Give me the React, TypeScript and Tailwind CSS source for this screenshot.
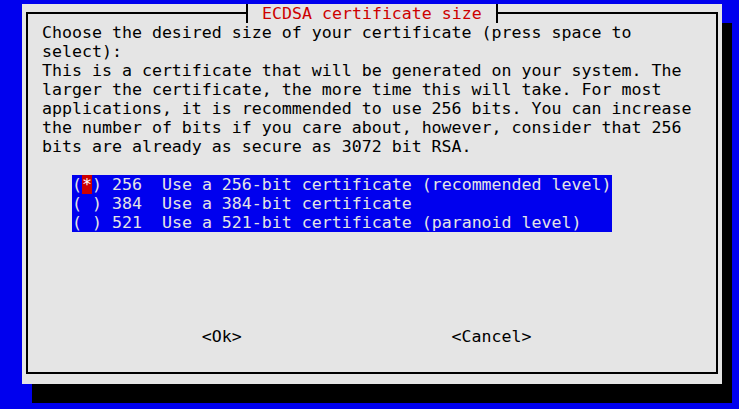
const promptLines = [
  "Choose the desired size of your certificate (press space to",
  "select):",
  "This is a certificate that will be generated on your system. The",
  "larger the certificate, the more time this will take. For most",
  "applications, it is recommended to use 256 bits. You can increase",
  "the number of bits if you care about, however, consider that 256",
  "bits are already as secure as 3072 bit RSA.",
];

const options = [
  { bits: "256", label: "Use a 256-bit certificate (recommended level)", selected: true },
  { bits: "384", label: "Use a 384-bit certificate", selected: false },
  { bits: "521", label: "Use a 521-bit certificate (paranoid level)", selected: false },
];

const App = () => {
  return (
    <div
      className="w-full h-screen bg-[#0000ee] pt-[4px] pl-[22px] overflow-hidden text-[16.6px] leading-[19px] whitespace-pre"
      style={{ fontFamily: '"DejaVu Sans Mono", "Liberation Mono", monospace' }}
    >
      {/* dialog box with its shadow */}
      <div className="relative w-[700px] h-[380px] bg-[#e5e5e5] pl-[4px] pt-[8px] shadow-[10px_19px_0_0_#000]">
        <div className="w-[692px] h-[362px] border-2 border-black pl-[14px] pt-[9px] text-black">
          {promptLines.map((line) => (
            <div key={line}>{line}</div>
          ))}

          {/* radio list */}
          <div className="mt-[19px] ml-[30px] w-[540px] bg-[#0000ee] text-[#e5e5e5]">
            {options.map((opt) => (
              <div key={opt.bits} className="flex">
                <span>(</span>
                {opt.selected ? (
                  <span className="bg-[#cd0000] text-white">*</span>
                ) : (
                  <span> </span>
                )}
                <span>{`) ${opt.bits}  ${opt.label}`}</span>
              </div>
            ))}
          </div>

          {/* buttons */}
          <div className="mt-[95px]">{"                <Ok>                     <Cancel>"}</div>
        </div>

        {/* title over the top border */}
        <div className="absolute left-[224px] top-0 h-[19px] border-x-2 border-black bg-[#e5e5e5] px-[14px] text-[#cd0000]">
          ECDSA certificate size
        </div>
      </div>
    </div>
  );
};

export default App;
